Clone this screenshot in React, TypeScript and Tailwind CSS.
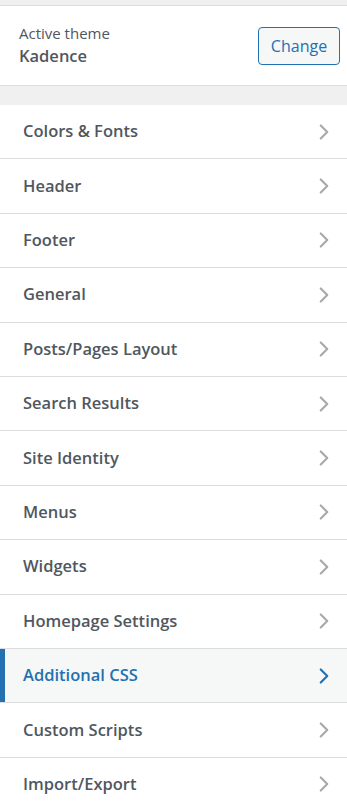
import { ChevronRight } from 'lucide-react'

const sections = [
  'Colors & Fonts',
  'Header',
  'Footer',
  'General',
  'Posts/Pages Layout',
  'Search Results',
  'Site Identity',
  'Menus',
  'Widgets',
  'Homepage Settings',
  'Additional CSS',
  'Custom Scripts',
  'Import/Export',
]

const ACTIVE = 'Additional CSS'

export default function App() {
  return (
    <div
      className="w-[347px] h-[807px] overflow-hidden bg-[#f0f0f1] text-[#50575e]"
      style={{ fontFamily: '"Open Sans", "Noto Sans", sans-serif' }}
    >
      <div className="h-[5px]" />
      <div className="flex items-center justify-between h-[81px] bg-white border-y border-[#dcdcde] pl-[19px] pr-[7px]">
        <div className="flex flex-col">
          <span className="text-[15px] leading-[21px] text-[#50575e]">Active theme</span>
          <span className="text-[16.5px] leading-[24px] font-semibold text-[#50575e]">Kadence</span>
        </div>
        <button className="h-[38px] w-[82px] rounded-[4px] border border-[#2271b1] bg-[#f6f7f7] text-[16px] text-[#2271b1]">
          Change
        </button>
      </div>
      <div className="h-[19px]" />
      <ul className="bg-white">
        {sections.map(title => {
          const active = title === ACTIVE
          return (
            <li
              key={title}
              className={
                active
                  ? 'relative flex items-center justify-between h-[54.4px] pl-[23px] pr-[10px] border-b border-[#dcdcde] bg-[#f6f7f7] text-[#2271b1]'
                  : 'relative flex items-center justify-between h-[54.4px] pl-[23px] pr-[10px] border-b border-[#dcdcde] text-[#50575e]'
              }
            >
              {active && <span className="absolute left-0 top-0 bottom-0 w-[5px] bg-[#2271b1]" />}
              <span className="text-[16.5px] font-semibold">{title}</span>
              <ChevronRight
                className={active ? 'size-[26px] text-[#2271b1]' : 'size-[26px] text-[#a7aaad]'}
                strokeWidth={2}
              />
            </li>
          )
        })}
      </ul>
    </div>
  )
}
